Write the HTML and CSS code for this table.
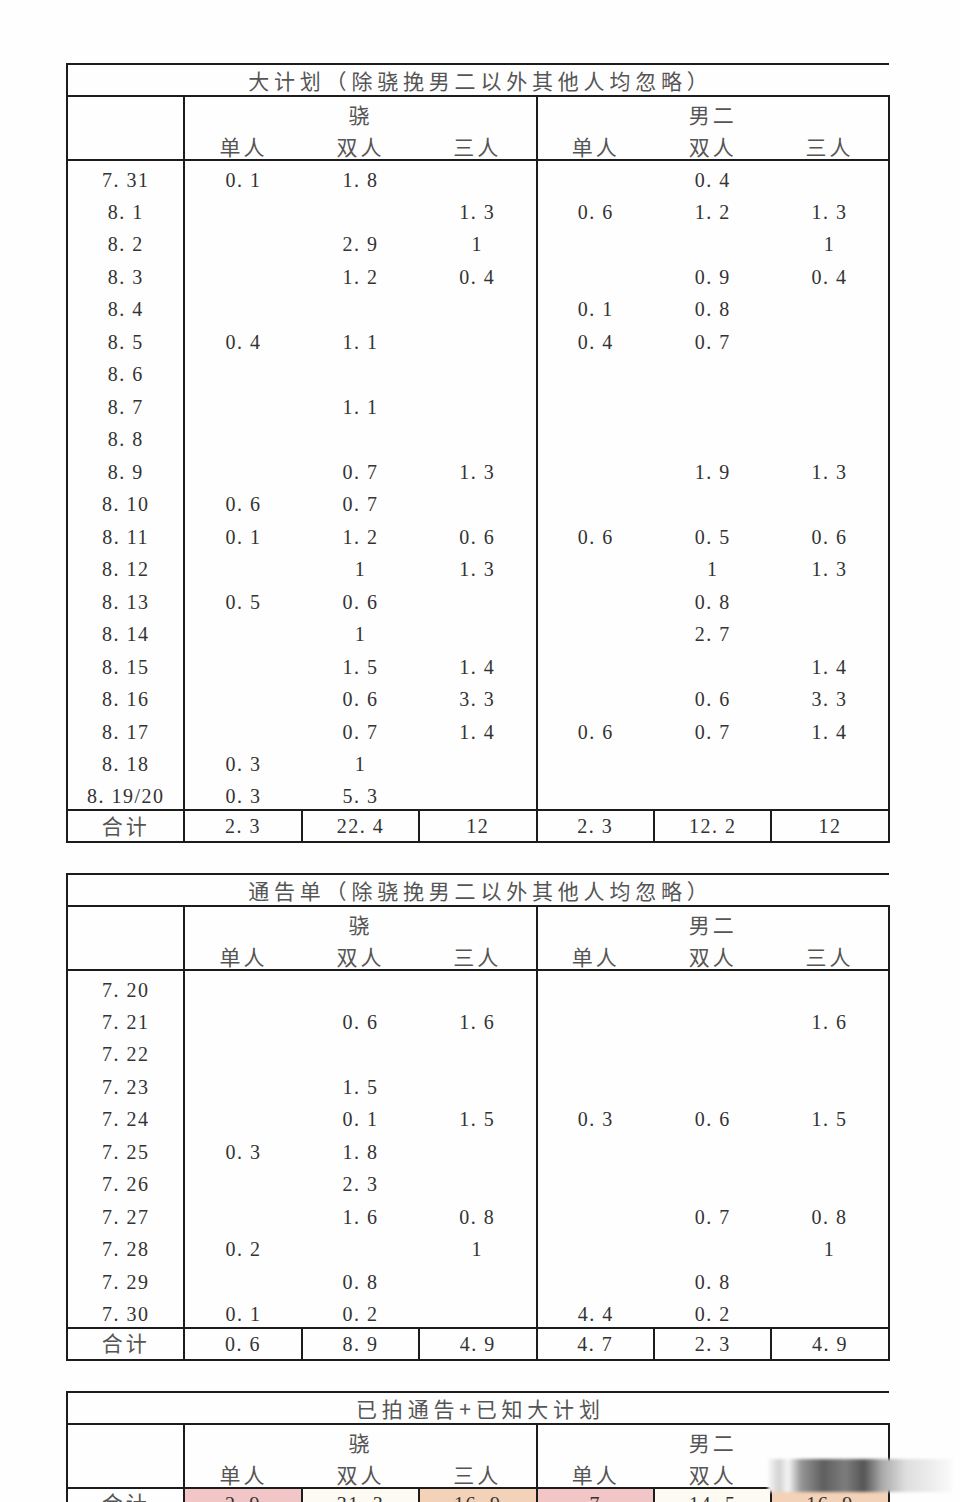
FILE: index.html
```html
<!DOCTYPE html>
<html lang="zh">
<head>
<meta charset="utf-8">
<title>大计划 / 通告单</title>
<link rel="stylesheet" href="styles.css">
</head>
<body>
<main class="page">

<table class="sheet">
  <colgroup><col><col><col><col><col><col><col></colgroup>
  <tr class="title"><td colspan="7">大计划（除骁挽男二以外其他人均忽略）</td></tr>
  <tr class="grp"><td class="lab" rowspan="2"></td><td colspan="3" class="g">骁</td><td colspan="3" class="g">男二</td></tr>
  <tr class="sub"><td>单人</td><td>双人</td><td class="gr">三人</td><td>单人</td><td>双人</td><td class="gr">三人</td></tr>
  <tr class="row"><td>7. 31</td><td>0. 1</td><td>1. 8</td><td></td><td></td><td>0. 4</td><td></td></tr>
  <tr class="row"><td>8. 1</td><td></td><td></td><td>1. 3</td><td>0. 6</td><td>1. 2</td><td>1. 3</td></tr>
  <tr class="row"><td>8. 2</td><td></td><td>2. 9</td><td>1</td><td></td><td></td><td>1</td></tr>
  <tr class="row"><td>8. 3</td><td></td><td>1. 2</td><td>0. 4</td><td></td><td>0. 9</td><td>0. 4</td></tr>
  <tr class="row"><td>8. 4</td><td></td><td></td><td></td><td>0. 1</td><td>0. 8</td><td></td></tr>
  <tr class="row"><td>8. 5</td><td>0. 4</td><td>1. 1</td><td></td><td>0. 4</td><td>0. 7</td><td></td></tr>
  <tr class="row"><td>8. 6</td><td></td><td></td><td></td><td></td><td></td><td></td></tr>
  <tr class="row"><td>8. 7</td><td></td><td>1. 1</td><td></td><td></td><td></td><td></td></tr>
  <tr class="row"><td>8. 8</td><td></td><td></td><td></td><td></td><td></td><td></td></tr>
  <tr class="row"><td>8. 9</td><td></td><td>0. 7</td><td>1. 3</td><td></td><td>1. 9</td><td>1. 3</td></tr>
  <tr class="row"><td>8. 10</td><td>0. 6</td><td>0. 7</td><td></td><td></td><td></td><td></td></tr>
  <tr class="row"><td>8. 11</td><td>0. 1</td><td>1. 2</td><td>0. 6</td><td>0. 6</td><td>0. 5</td><td>0. 6</td></tr>
  <tr class="row"><td>8. 12</td><td></td><td>1</td><td>1. 3</td><td></td><td>1</td><td>1. 3</td></tr>
  <tr class="row"><td>8. 13</td><td>0. 5</td><td>0. 6</td><td></td><td></td><td>0. 8</td><td></td></tr>
  <tr class="row"><td>8. 14</td><td></td><td>1</td><td></td><td></td><td>2. 7</td><td></td></tr>
  <tr class="row"><td>8. 15</td><td></td><td>1. 5</td><td>1. 4</td><td></td><td></td><td>1. 4</td></tr>
  <tr class="row"><td>8. 16</td><td></td><td>0. 6</td><td>3. 3</td><td></td><td>0. 6</td><td>3. 3</td></tr>
  <tr class="row"><td>8. 17</td><td></td><td>0. 7</td><td>1. 4</td><td>0. 6</td><td>0. 7</td><td>1. 4</td></tr>
  <tr class="row"><td>8. 18</td><td>0. 3</td><td>1</td><td></td><td></td><td></td><td></td></tr>
  <tr class="row"><td>8. 19/20</td><td>0. 3</td><td>5. 3</td><td></td><td></td><td></td><td></td></tr>
  <tr class="total"><td class="cn">合计</td><td>2. 3</td><td>22. 4</td><td>12</td><td>2. 3</td><td>12. 2</td><td>12</td></tr>
</table>

<table class="sheet">
  <colgroup><col><col><col><col><col><col><col></colgroup>
  <tr class="title"><td colspan="7">通告单（除骁挽男二以外其他人均忽略）</td></tr>
  <tr class="grp"><td class="lab" rowspan="2"></td><td colspan="3" class="g">骁</td><td colspan="3" class="g">男二</td></tr>
  <tr class="sub"><td>单人</td><td>双人</td><td class="gr">三人</td><td>单人</td><td>双人</td><td class="gr">三人</td></tr>
  <tr class="row"><td>7. 20</td><td></td><td></td><td></td><td></td><td></td><td></td></tr>
  <tr class="row"><td>7. 21</td><td></td><td>0. 6</td><td>1. 6</td><td></td><td></td><td>1. 6</td></tr>
  <tr class="row"><td>7. 22</td><td></td><td></td><td></td><td></td><td></td><td></td></tr>
  <tr class="row"><td>7. 23</td><td></td><td>1. 5</td><td></td><td></td><td></td><td></td></tr>
  <tr class="row"><td>7. 24</td><td></td><td>0. 1</td><td>1. 5</td><td>0. 3</td><td>0. 6</td><td>1. 5</td></tr>
  <tr class="row"><td>7. 25</td><td>0. 3</td><td>1. 8</td><td></td><td></td><td></td><td></td></tr>
  <tr class="row"><td>7. 26</td><td></td><td>2. 3</td><td></td><td></td><td></td><td></td></tr>
  <tr class="row"><td>7. 27</td><td></td><td>1. 6</td><td>0. 8</td><td></td><td>0. 7</td><td>0. 8</td></tr>
  <tr class="row"><td>7. 28</td><td>0. 2</td><td></td><td>1</td><td></td><td></td><td>1</td></tr>
  <tr class="row"><td>7. 29</td><td></td><td>0. 8</td><td></td><td></td><td>0. 8</td><td></td></tr>
  <tr class="row"><td>7. 30</td><td>0. 1</td><td>0. 2</td><td></td><td>4. 4</td><td>0. 2</td><td></td></tr>
  <tr class="total"><td class="cn">合计</td><td>0. 6</td><td>8. 9</td><td>4. 9</td><td>4. 7</td><td>2. 3</td><td>4. 9</td></tr>
</table>

<table class="sheet">
  <colgroup><col><col><col><col><col><col><col></colgroup>
  <tr class="title"><td colspan="7">已拍通告+已知大计划</td></tr>
  <tr class="grp"><td class="lab" rowspan="2"></td><td colspan="3" class="g">骁</td><td colspan="3" class="g">男二</td></tr>
  <tr class="sub"><td>单人</td><td>双人</td><td class="gr">三人</td><td>单人</td><td>双人</td><td class="gr">三人</td></tr>
  <tr class="total"><td class="cn">合计</td><td class="pink">2. 9</td><td class="cream">31. 3</td><td class="peach">16. 9</td><td class="pink">7</td><td class="cream">14. 5</td><td class="peach">16. 9</td></tr>
</table>

<div class="watermark" aria-hidden="true"></div>
</main>
</body>
</html>
```

FILE: styles.css
```css
html, body {
  margin: 0;
  padding: 0;
  background: #fefefe;
}

.page {
  position: relative;
  width: 960px;
  height: 1502px;
  overflow: hidden;
  padding: 63px 0 0 66px;
  box-sizing: border-box;
  display: flex;
  flex-direction: column;
  gap: 30px;
  font-family: "Liberation Serif", "Noto Sans CJK SC", serif;
  color: #333;
}

.sheet {
  border-collapse: collapse;
  table-layout: fixed;
  width: 822px;
  flex: none;
}

.sheet col {
  width: 117.4px;
}

.sheet td {
  box-sizing: border-box;
  padding: 0;
  text-align: center;
  vertical-align: middle;
  font-size: 20px;
  letter-spacing: 1.5px;
  line-height: 20px;
  white-space: nowrap;
}

/* title */
.title td {
  height: 32px;
  border-top: 2px solid #1c1c1c;
  border-left: 2px solid #1c1c1c;
  border-bottom: 2px solid #1c1c1c;
  font-family: "Noto Sans CJK SC", sans-serif;
  font-weight: 400;
  font-size: 21px;
  line-height: 22px;
  letter-spacing: 4.8px;
  color: #555;
  vertical-align: middle;
  padding-left: 4px;
}

/* header */
.grp td, .sub td {
  font-family: "Noto Sans CJK SC", sans-serif;
  font-weight: 400;
  font-size: 21px;
  line-height: 22px;
  letter-spacing: 3px;
  color: #555;
}

.grp td {
  height: 32px;
  vertical-align: bottom;
  padding-bottom: 3px;
}

.grp .lab {
  border-left: 2px solid #1c1c1c;
  border-right: 2px solid #1c1c1c;
  border-bottom: 2px solid #1c1c1c;
}

.grp .g {
  border-right: 2px solid #1c1c1c;
}

.sub td {
  height: 32px;
  vertical-align: bottom;
  padding-bottom: 2px;
  border-bottom: 2px solid #1c1c1c;
}

.sub .gr {
  border-right: 2px solid #1c1c1c;
}

/* data rows */
.row td {
  height: 32.5px;
  padding-top: 6px;
}

.row td:first-child {
  border-left: 2px solid #1c1c1c;
  border-right: 2px solid #1c1c1c;
}

.row td:nth-child(4),
.row td:last-child {
  border-right: 2px solid #1c1c1c;
}

/* totals */
.total td {
  height: 32px;
  border: 2px solid #1c1c1c;
  padding-top: 0;
}

.total .cn {
  font-family: "Noto Sans CJK SC", sans-serif;
  font-weight: 400;
  font-size: 21px;
  line-height: 22px;
  letter-spacing: 3px;
  color: #555;
  padding-bottom: 3px;
}

.total .pink { background: #f2c6c6; }
.total .cream { background: #fdfaf1; }
.total .peach { background: #f4d2b8; }

/* blurred platform watermark over the lower right corner */
.watermark {
  position: absolute;
  left: 768px;
  top: 1459px;
  width: 184px;
  height: 33px;
  background:
    linear-gradient(90deg,
      rgba(248,248,248,1) 0%,
      rgba(210,210,210,1) 6%,
      rgba(245,245,245,1) 11%,
      rgba(150,150,150,1) 18%,
      rgba(95,95,95,1) 30%,
      rgba(125,125,125,1) 42%,
      rgba(85,85,85,1) 52%,
      rgba(170,170,170,1) 62%,
      rgba(222,222,222,1) 75%,
      rgba(238,238,238,1) 90%,
      rgba(250,250,250,1) 100%);
  filter: blur(1.5px);
}
```
